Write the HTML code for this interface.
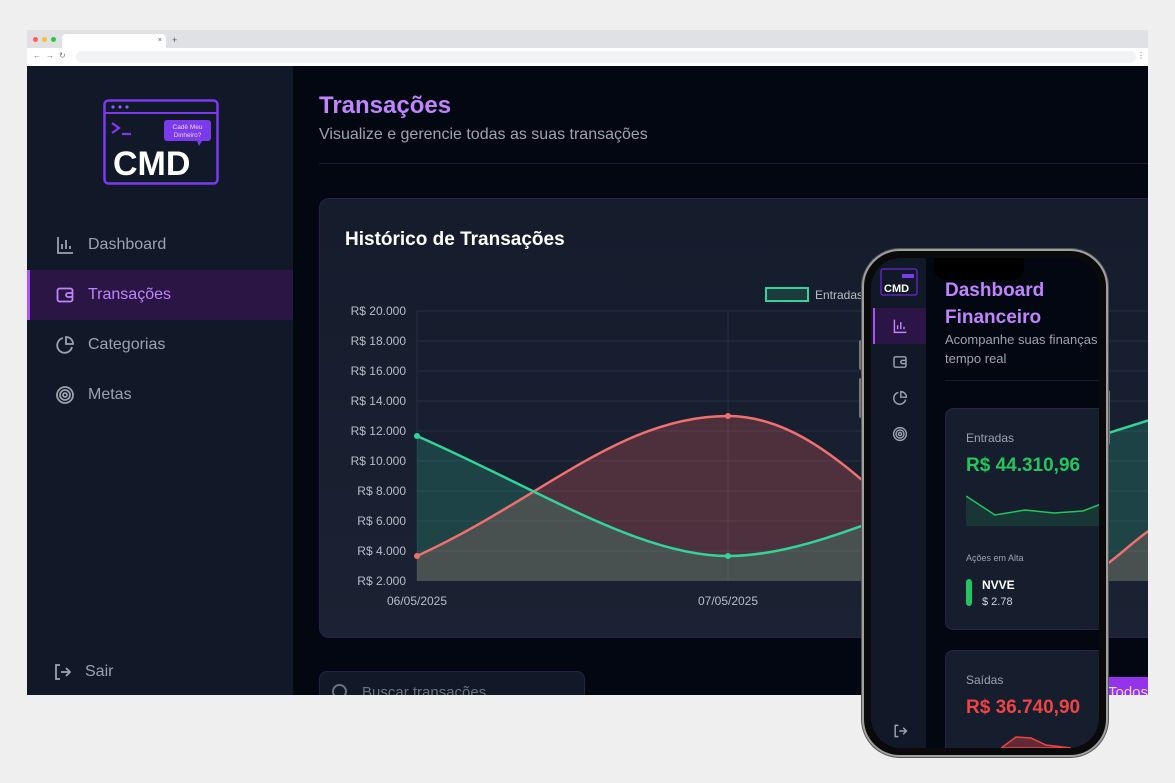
<!DOCTYPE html>
<html><head><meta charset="utf-8"><style>
*{margin:0;padding:0;box-sizing:border-box}
body{width:1175px;height:783px;background:#efefef;position:relative;overflow:hidden;font-family:"Liberation Sans",sans-serif}
.abs{position:absolute}
.side a{position:absolute;left:0;width:266px;height:50px;display:flex;align-items:center;padding-left:28px;color:#9ca3af;font-size:16px;text-decoration:none}
.side svg{margin-right:13px}
</style></head><body>
<div class="abs" style="left:27px;top:30px;width:1121px;height:36px;background:#dfe1e5"></div>
<div class="abs" style="left:33px;top:37px;width:5px;height:5px;border-radius:50%;background:#ff5f57"></div>
<div class="abs" style="left:42px;top:37px;width:5px;height:5px;border-radius:50%;background:#febc2e"></div>
<div class="abs" style="left:51px;top:37px;width:5px;height:5px;border-radius:50%;background:#28c840"></div>
<div class="abs" style="left:62px;top:34px;width:104px;height:15px;background:#fff;border-radius:4px 4px 0 0;font-size:7px;color:#555;text-align:right;padding:3px 4px 0 0">×</div>
<div class="abs" style="left:172px;top:35px;font-size:9px;color:#555">+</div>
<div class="abs" style="left:27px;top:48px;width:1121px;height:18px;background:#fff"></div>
<div class="abs" style="left:33px;top:51px;font-size:8px;color:#777;letter-spacing:5px">←→↻</div>
<div class="abs" style="left:76px;top:51px;width:1060px;height:12px;background:#f1f3f4;border-radius:6px"></div>
<div class="abs" style="left:1137px;top:51px;font-size:8px;color:#777">⋮</div>

<div class="abs" style="left:27px;top:66px;width:1121px;height:629px;background:#030712;overflow:hidden">
 <div class="abs side" style="left:0;top:0;width:266px;height:629px;background:#111827">
  <svg class="abs" style="left:76px;top:33px" width="116" height="86" viewBox="0 0 116 86">
   <rect x="1.5" y="1.5" width="113" height="83" rx="4" fill="none" stroke="#7c3aed" stroke-width="2.5"/>
   <line x1="1.5" y1="14" x2="114.5" y2="14" stroke="#7c3aed" stroke-width="2"/>
   <circle cx="10" cy="8" r="1.6" fill="#8b5cf6"/><circle cx="17" cy="8" r="1.6" fill="#8b5cf6"/><circle cx="24" cy="8" r="1.6" fill="#8b5cf6"/>
   <path d="M9 24l7 5-7 5M19 35h9" fill="none" stroke="#7c3aed" stroke-width="2.3"/>
   <rect x="61" y="21" width="47" height="21" rx="3" fill="#7c3aed"/><path d="M94 42l2 5 3-5z" fill="#7c3aed"/>
   <text x="84.5" y="30" font-size="6.5" fill="#e9d5ff" text-anchor="middle" font-family="Liberation Sans">Cadê Meu</text>
   <text x="84.5" y="38" font-size="6.5" fill="#e9d5ff" text-anchor="middle" font-family="Liberation Sans">Dinheiro?</text>
   <text x="10" y="76" font-size="34" font-weight="bold" fill="#fff" font-family="Liberation Sans">CMD</text>
  </svg>
  <a style="top:154px"><svg width="20" height="20" viewBox="0 0 20 20" fill="none" stroke="#9ca3af" stroke-width="1.8"><path d="M3 2v16h15M7 14V9M11 14V5M15 14v-3"/></svg>Dashboard</a>
  <a style="top:204px;background:#2a1545;color:#c084fc;border-left:3px solid #a855f7;padding-left:25px"><svg width="20" height="20" viewBox="0 0 20 20" fill="none" stroke="#c084fc" stroke-width="1.8"><rect x="2.5" y="3.5" width="15" height="13" rx="2"/><path d="M17 8h-4a2 2 0 000 4h4"/></svg>Transações</a>
  <a style="top:254px"><svg width="20" height="20" viewBox="0 0 20 20" fill="none" stroke="#9ca3af" stroke-width="1.8"><path d="M17 12A7.5 7.5 0 118 3"/><path d="M11 2a7 7 0 017 7h-7z"/></svg>Categorias</a>
  <a style="top:304px"><svg width="20" height="20" viewBox="0 0 20 20" fill="none" stroke="#9ca3af" stroke-width="1.8"><circle cx="10" cy="10" r="8"/><circle cx="10" cy="10" r="5"/><circle cx="10" cy="10" r="2"/></svg>Metas</a>
  <a style="top:581px;padding-left:25px"><svg width="20" height="20" viewBox="0 0 20 20" fill="none" stroke="#9ca3af" stroke-width="1.8"><path d="M8 3H4v14h4M9 10h9M14 6l4 4-4 4"/></svg>Sair</a>
 </div>
 <div class="abs" style="left:292px;top:26px;font-size:24px;font-weight:bold;color:#c084fc">Transações</div>
 <div class="abs" style="left:292px;top:60px;font-size:16px;color:#9ca3af">Visualize e gerencie todas as suas transações</div>
 <div class="abs" style="left:292px;top:97px;width:829px;height:1px;background:#1f1a33"></div>
 <div class="abs" style="left:292px;top:132px;width:850px;height:440px;background:linear-gradient(#151c2c,#1a2233);border:1px solid #2c1f4a;border-radius:10px"></div>
 <div class="abs" style="left:318px;top:163px;font-size:19px;font-weight:bold;color:#fff">Histórico de Transações</div>
 <div class="abs" style="left:292px;top:605px;width:266px;height:40px;background:#111827;border:1px solid #2c1f4a;border-radius:8px;color:#6b7280;font-size:15px;padding:12px 0 0 42px">Buscar transações</div>
 <div class="abs" style="left:305px;top:618px;width:15px;height:15px;border:2px solid #6b7280;border-radius:50%"></div>
 <div class="abs" style="left:1075px;top:611px;width:60px;height:30px;background:#9333ea;color:#e9d5ff;font-size:15px;padding:7px 0 0 6px">Todos</div>
</div>

<svg class="abs" style="left:0;top:0" width="1148" height="783" viewBox="0 0 1148 783">
 <g stroke="#243044" stroke-width="1">
  <line x1="417" y1="311" x2="1148" y2="311"/><line x1="417" y1="341" x2="1148" y2="341"/><line x1="417" y1="371" x2="1148" y2="371"/><line x1="417" y1="401" x2="1148" y2="401"/><line x1="417" y1="431" x2="1148" y2="431"/><line x1="417" y1="461" x2="1148" y2="461"/><line x1="417" y1="491" x2="1148" y2="491"/><line x1="417" y1="521" x2="1148" y2="521"/><line x1="417" y1="551" x2="1148" y2="551"/>
  <line x1="417" y1="311" x2="417" y2="581"/><line x1="728" y1="311" x2="728" y2="581"/>
 </g>
 <path d="M417 556C540 500 620 416 728 416C850 416 930 590 1039 590C1090 590 1120 550 1150 530L1150 581L417 581Z" fill="rgba(240,100,100,0.25)"/>
 <path d="M417 436C540 490 640 556 728 556C830 556 950 480 1150 420L1150 581L417 581Z" fill="rgba(52,211,153,0.2)"/>
 <path d="M417 556C540 500 620 416 728 416C850 416 930 590 1039 590C1090 590 1120 550 1150 530" fill="none" stroke="#f07070" stroke-width="2.5"/>
 <path d="M417 436C540 490 640 556 728 556C830 556 950 480 1150 420" fill="none" stroke="#34d399" stroke-width="2.5"/>
 <circle cx="417" cy="556" r="3" fill="#f07070"/><circle cx="728" cy="416" r="3" fill="#f07070"/>
 <circle cx="417" cy="436" r="3" fill="#34d399"/><circle cx="728" cy="556" r="3" fill="#34d399"/>
 <g font-family="Liberation Sans" font-size="12" fill="#b8bcc4" text-anchor="end">
  <text x="406" y="315">R$ 20.000</text><text x="406" y="345">R$ 18.000</text><text x="406" y="375">R$ 16.000</text><text x="406" y="405">R$ 14.000</text><text x="406" y="435">R$ 12.000</text><text x="406" y="465">R$ 10.000</text><text x="406" y="495">R$ 8.000</text><text x="406" y="525">R$ 6.000</text><text x="406" y="555">R$ 4.000</text><text x="406" y="585">R$ 2.000</text>
 </g>
 <g font-family="Liberation Sans" font-size="12" fill="#b8bcc4" text-anchor="middle"><text x="417" y="605">06/05/2025</text><text x="728" y="605">07/05/2025</text></g>
 <rect x="766" y="288" width="42" height="13" fill="#1d3b3a" stroke="#34d399" stroke-width="2"/>
 <text x="815" y="299" font-family="Liberation Sans" font-size="12" fill="#b8bcc4">Entradas</text>
</svg>

<!-- phone -->
<div class="abs" style="left:859px;top:340px;width:4px;height:30px;background:#777;border-radius:2px"></div>
<div class="abs" style="left:859px;top:378px;width:4px;height:40px;background:#777;border-radius:2px"></div>
<div class="abs" style="left:1106px;top:390px;width:4px;height:55px;background:#777;border-radius:2px"></div>
<div class="abs" style="left:862px;top:249px;width:246px;height:508px;border-radius:38px;background:#0a0a0a;border:2px solid #a0a0a0;box-shadow:0 0 0 1px #555"></div>
<div class="abs" style="left:871px;top:258px;width:228px;height:490px;border-radius:30px;background:#030712;overflow:hidden">
 <div class="abs" style="left:0;top:0;width:55px;height:490px;background:#111827"></div>
 <svg class="abs" style="left:9px;top:10px" width="38" height="28" viewBox="0 0 38 28"><rect x="1" y="1" width="36" height="26" rx="2" fill="none" stroke="#6d28d9" stroke-width="1.2"/><rect x="22" y="6" width="12" height="4" fill="#7c3aed"/><text x="4" y="24" font-size="11" font-weight="bold" fill="#fff" font-family="Liberation Sans">CMD</text></svg>
 <div class="abs" style="left:2px;top:50px;width:53px;height:36px;background:#2a1545;border-left:2px solid #a855f7"></div>
 <svg class="abs" style="left:21px;top:60px" width="16" height="16" viewBox="0 0 20 20" fill="none" stroke="#c084fc" stroke-width="1.8"><path d="M3 2v16h15M7 14V9M11 14V5M15 14v-3"/></svg>
 <svg class="abs" style="left:21px;top:96px" width="16" height="16" viewBox="0 0 20 20" fill="none" stroke="#9ca3af" stroke-width="1.8"><rect x="2.5" y="3.5" width="15" height="13" rx="2"/><path d="M17 8h-4a2 2 0 000 4h4"/></svg>
 <svg class="abs" style="left:21px;top:132px" width="16" height="16" viewBox="0 0 20 20" fill="none" stroke="#9ca3af" stroke-width="1.8"><path d="M17 12A7.5 7.5 0 118 3"/><path d="M11 2a7 7 0 017 7h-7z"/></svg>
 <svg class="abs" style="left:21px;top:168px" width="16" height="16" viewBox="0 0 20 20" fill="none" stroke="#9ca3af" stroke-width="1.8"><circle cx="10" cy="10" r="8"/><circle cx="10" cy="10" r="5"/><circle cx="10" cy="10" r="2"/></svg>
 <svg class="abs" style="left:21px;top:465px" width="16" height="16" viewBox="0 0 20 20" fill="none" stroke="#9ca3af" stroke-width="1.8"><path d="M8 3H4v14h4M9 10h9M14 6l4 4-4 4"/></svg>
 <div class="abs" style="left:63px;top:0;width:90px;height:22px;background:#000;border-radius:0 0 12px 12px"></div>
 <div class="abs" style="left:74px;top:19px;font-size:19px;font-weight:bold;color:#c084fc;line-height:27px">Dashboard<br>Financeiro</div>
 <div class="abs" style="left:74px;top:72px;font-size:13px;color:#9ca3af;line-height:19px;white-space:nowrap">Acompanhe suas finanças<br>tempo real</div>
 <div class="abs" style="left:74px;top:122px;width:160px;height:1px;background:#1f1a33"></div>
 <div class="abs" style="left:74px;top:150px;width:170px;height:222px;background:#161e2e;border:1px solid #2c1f4a;border-radius:8px"></div>
 <div class="abs" style="left:95px;top:173px;font-size:12px;color:#9ca3af">Entradas</div>
 <div class="abs" style="left:95px;top:197px;font-size:19px;font-weight:bold;color:#22c55e">R$ 44.310,96</div>
 <svg class="abs" style="left:95px;top:236px" width="135" height="32"><path d="M0 2L29 21 59 16 88 19 117 17 135 10V32H0Z" fill="rgba(34,197,94,0.15)"/><path d="M0 2L29 21 59 16 88 19 117 17 135 10" fill="none" stroke="#22c55e" stroke-width="1.5"/></svg>
 <div class="abs" style="left:95px;top:295px;font-size:9px;color:#9ca3af">Ações em Alta</div>
 <div class="abs" style="left:95px;top:321px;width:6px;height:27px;background:#22c55e;border-radius:3px"></div>
 <div class="abs" style="left:111px;top:320px;font-size:12px;font-weight:bold;color:#fff">NVVE</div>
 <div class="abs" style="left:111px;top:338px;font-size:11px;color:#d1d5db">$ 2.78</div>
 <div class="abs" style="left:74px;top:392px;width:170px;height:120px;background:#161e2e;border:1px solid #2c1f4a;border-radius:8px"></div>
 <div class="abs" style="left:95px;top:415px;font-size:12px;color:#9ca3af">Saídas</div>
 <div class="abs" style="left:95px;top:439px;font-size:19px;font-weight:bold;color:#ef4444">R$ 36.740,90</div>
 <svg class="abs" style="left:130px;top:475px" width="70" height="15"><path d="M0 15L15 4 30 5 45 12 70 15Z" fill="rgba(239,68,68,0.35)" stroke="#ef4444" stroke-width="1.5"/></svg>
</div>
</body></html>
